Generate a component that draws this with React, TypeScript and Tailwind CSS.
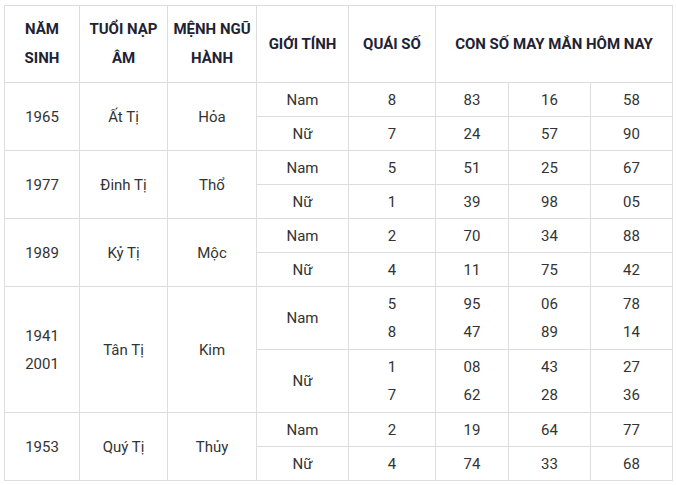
const rows = [
  {
    year: ["1965"],
    tuoi: "Ất Tị",
    menh: "Hỏa",
    tall: false,
    items: [
      { gt: "Nam", qs: ["8"], nums: [["83"], ["16"], ["58"]] },
      { gt: "Nữ", qs: ["7"], nums: [["24"], ["57"], ["90"]] },
    ],
  },
  {
    year: ["1977"],
    tuoi: "Đinh Tị",
    menh: "Thổ",
    tall: false,
    items: [
      { gt: "Nam", qs: ["5"], nums: [["51"], ["25"], ["67"]] },
      { gt: "Nữ", qs: ["1"], nums: [["39"], ["98"], ["05"]] },
    ],
  },
  {
    year: ["1989"],
    tuoi: "Kỷ Tị",
    menh: "Mộc",
    tall: false,
    items: [
      { gt: "Nam", qs: ["2"], nums: [["70"], ["34"], ["88"]] },
      { gt: "Nữ", qs: ["4"], nums: [["11"], ["75"], ["42"]] },
    ],
  },
  {
    year: ["1941", "2001"],
    tuoi: "Tân Tị",
    menh: "Kim",
    tall: true,
    items: [
      { gt: "Nam", qs: ["5", "8"], nums: [["95", "47"], ["06", "89"], ["78", "14"]] },
      { gt: "Nữ", qs: ["1", "7"], nums: [["08", "62"], ["43", "28"], ["27", "36"]] },
    ],
  },
  {
    year: ["1953"],
    tuoi: "Quý Tị",
    menh: "Thủy",
    tall: false,
    items: [
      { gt: "Nam", qs: ["2"], nums: [["19"], ["64"], ["77"]] },
      { gt: "Nữ", qs: ["4"], nums: [["74"], ["33"], ["68"]] },
    ],
  },
];

const Lines = ({ lines }: { lines: string[] }) => (
  <>
    {lines.map((l, i) => (
      <div key={i}>{l}</div>
    ))}
  </>
);

export default function App() {
  const td = "border border-[#dddddd] text-center align-middle p-0";
  return (
    <div className="bg-white w-[676px] h-[485px] pt-[5px] pl-[4px] font-['Roboto',sans-serif] text-[15px] text-[#333333]">
      <table className="border-collapse table-fixed w-[668px]">
        <colgroup>
          <col className="w-[75px]" />
          <col className="w-[88px]" />
          <col className="w-[89px]" />
          <col className="w-[92px]" />
          <col className="w-[87px]" />
          <col className="w-[73px]" />
          <col className="w-[82px]" />
          <col className="w-[82px]" />
        </colgroup>
        <thead>
          <tr className="h-[77px] font-bold text-[#222233] leading-[29px]">
            <th className={td}>
              NĂM
              <br />
              SINH
            </th>
            <th className={td}>
              TUỔI NẠP
              <br />
              ÂM
            </th>
            <th className={td}>
              MỆNH NGŨ
              <br />
              HÀNH
            </th>
            <th className={td}>GIỚI TÍNH</th>
            <th className={td}>QUÁI SỐ</th>
            <th className={td} colSpan={3}>
              CON SỐ MAY MẮN HÔM NAY
            </th>
          </tr>
        </thead>
        <tbody className="leading-[28px]">
          {rows.map((r) =>
            r.items.map((it, i) => (
              <tr key={r.tuoi + i} className={r.tall ? "h-[63px]" : "h-[34px]"}>
                {i === 0 && (
                  <>
                    <td className={td} rowSpan={2}>
                      <Lines lines={r.year} />
                    </td>
                    <td className={td} rowSpan={2}>
                      {r.tuoi}
                    </td>
                    <td className={td} rowSpan={2}>
                      {r.menh}
                    </td>
                  </>
                )}
                <td className={td}>{it.gt}</td>
                <td className={td}>
                  <Lines lines={it.qs} />
                </td>
                {it.nums.map((n, j) => (
                  <td key={j} className={td}>
                    <Lines lines={n} />
                  </td>
                ))}
              </tr>
            ))
          )}
        </tbody>
      </table>
    </div>
  );
}
